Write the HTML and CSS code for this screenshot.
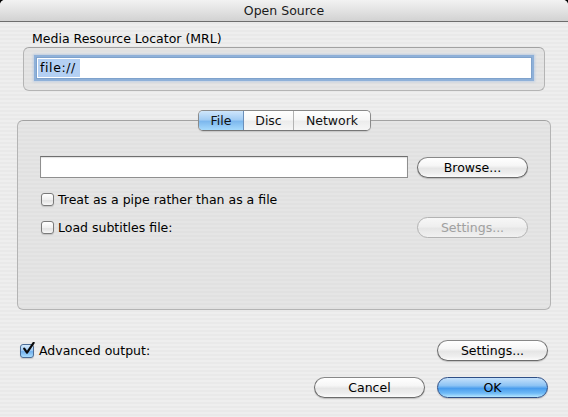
FILE: index.html
```html
<!DOCTYPE html>
<html>
<head>
<meta charset="utf-8">
<title>Open Source</title>
<link rel="stylesheet" href="styles.css">
</head>
<body>
<div class="window">
  <div class="titlebar">Open Source</div>
  <div class="content">
    <section class="mrl">
      <div class="mrl-label">Media Resource Locator (MRL)</div>
      <div class="groupbox mrl-box">
        <div class="input focused"><span class="sel">file://</span></div>
      </div>
    </section>

    <section class="tabs-section">
      <div class="segmented">
        <span class="seg seg-file active">File</span><span class="seg seg-disc">Disc</span><span class="seg seg-net">Network</span>
      </div>
      <div class="groupbox tabbox">
        <div class="row row-file">
          <div class="input file-field"></div>
          <button class="btn">Browse...</button>
        </div>
        <div class="row row-pipe">
          <label class="check"><span class="box"></span><span class="lbl">Treat as a pipe rather than as a file</span></label>
        </div>
        <div class="row row-sub">
          <label class="check"><span class="box"></span><span class="lbl">Load subtitles file:</span></label>
          <button class="btn disabled">Settings...</button>
        </div>
      </div>
    </section>

    <div class="adv-row">
      <label class="check adv">
        <span class="box checked"><svg viewBox="0 0 14 14" width="14" height="14"><path d="M3.2 6.6 L6 10.6 L12.6 0.8" fill="none" stroke="#0b0b0b" stroke-width="2.2" stroke-linecap="round" stroke-linejoin="round"/></svg></span>
        <span class="lbl">Advanced output:</span>
      </label>
      <button class="btn">Settings...</button>
    </div>

    <div class="actions">
      <button class="btn">Cancel</button>
      <button class="btn primary">OK</button>
    </div>
  </div>
</div>
</body>
</html>
```

FILE: styles.css
```css
* { box-sizing: border-box; }

html, body {
  margin: 0;
  padding: 0;
  background: #000;
}

body {
  font-family: "DejaVu Sans", "Liberation Sans", sans-serif;
  font-size: 12.5px;
  color: #000;
}

.window {
  width: 568px;
  height: 417px;
  border-radius: 5px 5px 0 0;
  overflow: hidden;
  background: repeating-linear-gradient(to bottom, #eeeeee 0, #eeeeee 2px, #e9e9e9 2px, #e9e9e9 4px);
}

.titlebar {
  height: 22px;
  line-height: 21px;
  text-align: center;
  font-size: 12.5px;
  color: #1a1a1a;
  background: linear-gradient(to bottom, #f2f2f2 0%, #e4e4e4 45%, #d2d2d2 100%);
  border-bottom: 1px solid #6d6d6d;
}

.content {
  display: flex;
  flex-direction: column;
}

/* MRL group */
.mrl {
  margin-left: 23px;
  width: 522px;
  display: flex;
  flex-direction: column;
}

.mrl-label {
  margin-top: 9px;
  padding-left: 9px;
  height: 16px;
  line-height: 16px;
}

.groupbox {
  border: 1px solid #b4b4b4;
  border-top-color: #a2a2a2;
  border-radius: 6px;
  background: repeating-linear-gradient(to bottom, #e5e5e5 0, #e5e5e5 2px, #e1e1e1 2px, #e1e1e1 4px);
}

.mrl-box {
  height: 44px;
  padding: 9px 0 0 12px;
}

.input {
  background: #fff;
  border: 1px solid #8f8f8f;
  border-top-color: #6f6f6f;
  box-shadow: inset 0 1px 1px rgba(0,0,0,0.12);
  height: 22px;
}

.input.focused {
  width: 496px;
  height: 22px;
  border: 1px solid #7fa2cc;
  box-shadow: 0 0 0 2px rgba(126, 165, 214, 0.75), 0 0 2px 3px rgba(150, 185, 225, 0.45);
  padding: 1px 0 0 1px;
}

.sel {
  display: inline-block;
  background: #b4d0f3;
  height: 18px;
  line-height: 18px;
  padding: 0 2px 0 2px;
  width: 42px;
  letter-spacing: 0.6px;
}

/* Tabs */
.tabs-section {
  display: flex;
  flex-direction: column;
  align-items: center;
  margin-top: 19px;
  width: 568px;
  padding: 0 17px;
}

.segmented {
  display: flex;
  height: 21px;
  border: 1px solid #8a8a8a;
  border-bottom-color: #777;
  border-radius: 5px;
  overflow: hidden;
  position: relative;
  z-index: 1;
  box-shadow: 0 1px 1px rgba(0,0,0,0.12);
  margin-left: 1px;
}

.seg {
  height: 19px;
  line-height: 19px;
  text-align: center;
  background: linear-gradient(to bottom, #ffffff 0%, #f7f7f7 45%, #ececec 55%, #f6f6f6 100%);
  border-left: 1px solid #b3b3b3;
  color: #111;
}

.seg-file { width: 45px; border-left: none; }
.seg-disc { width: 49px; }
.seg-net { width: 77px; }

.seg.active {
  background: linear-gradient(to bottom, #cfe6fb 0%, #a3cdf4 45%, #7db8ee 55%, #a6dafc 100%);
  border-right: 1px solid #6a8fba;
}

.seg.active + .seg { border-left: none; }

.tabbox {
  width: 534px;
  height: 190px;
  margin-top: -11px;
  padding: 35px 0 0 22px;
  display: flex;
  flex-direction: column;
}

.row {
  display: flex;
  align-items: center;
  width: 488px;
}

.row-file {
  align-items: flex-start;
  gap: 9px;
}

.file-field {
  width: 368px;
}

.row-file .btn { margin-top: 1px; }

.row-pipe {
  margin-top: 12px;
  height: 19px;
}

.row-sub {
  margin-top: 8px;
  height: 21px;
  justify-content: space-between;
}

/* Checkboxes */
.check {
  display: flex;
  align-items: center;
  gap: 4px;
  margin-left: 1px;
}

.box {
  width: 13px;
  height: 13px;
  border: 1px solid #7a7a7a;
  border-radius: 3px;
  background: linear-gradient(to bottom, #ffffff 0%, #f0f0f0 50%, #e2e2e2 60%, #f7f7f7 100%);
  box-shadow: 0 1px 1px rgba(0,0,0,0.15);
  flex: none;
}

.box.checked {
  position: relative;
  width: 14px;
  height: 14px;
  border-color: #4b6c96;
  background: linear-gradient(to bottom, #d6ebfd 0%, #9fcbf4 45%, #72b0ec 55%, #a9dcfd 100%);
}

.box.checked svg {
  position: absolute;
  left: 0;
  top: -3px;
}

/* Bottom rows */
.adv-row {
  margin-top: 30px;
  margin-left: 20px;
  width: 528px;
  height: 21px;
  display: flex;
  align-items: center;
  justify-content: space-between;
}

.check.adv {
  margin-left: 0;
  gap: 5px;
}

.actions {
  margin-top: 16px;
  margin-left: 314px;
  display: flex;
  gap: 12px;
}

/* Buttons */
.btn {
  font-family: "DejaVu Sans", "Liberation Sans", sans-serif;
  font-size: 12.5px;
  color: #000;
  width: 111px;
  height: 21px;
  padding: 0;
  border: 1px solid #6b6b6b;
  border-top-color: #888;
  border-radius: 11px;
  background: linear-gradient(to bottom, #ffffff 0%, #f6f6f6 40%, #e6e6e6 55%, #eeeeee 80%, #fbfbfb 100%);
  box-shadow: 0 1px 1px rgba(0,0,0,0.18);
  line-height: 19px;
  text-align: center;
}

.btn.disabled {
  color: #a0a0a0;
  border-color: #b3b3b3;
  background: linear-gradient(to bottom, #f7f7f7 0%, #efefef 45%, #e6e6e6 55%, #f1f1f1 100%);
  box-shadow: none;
}

.btn.primary {
  border-color: #2f4f86;
  background: linear-gradient(to bottom, #c5e1fb 0%, #8cc3f4 40%, #4a9ded 55%, #6fbaf6 80%, #b6e6ff 100%);
}
```
